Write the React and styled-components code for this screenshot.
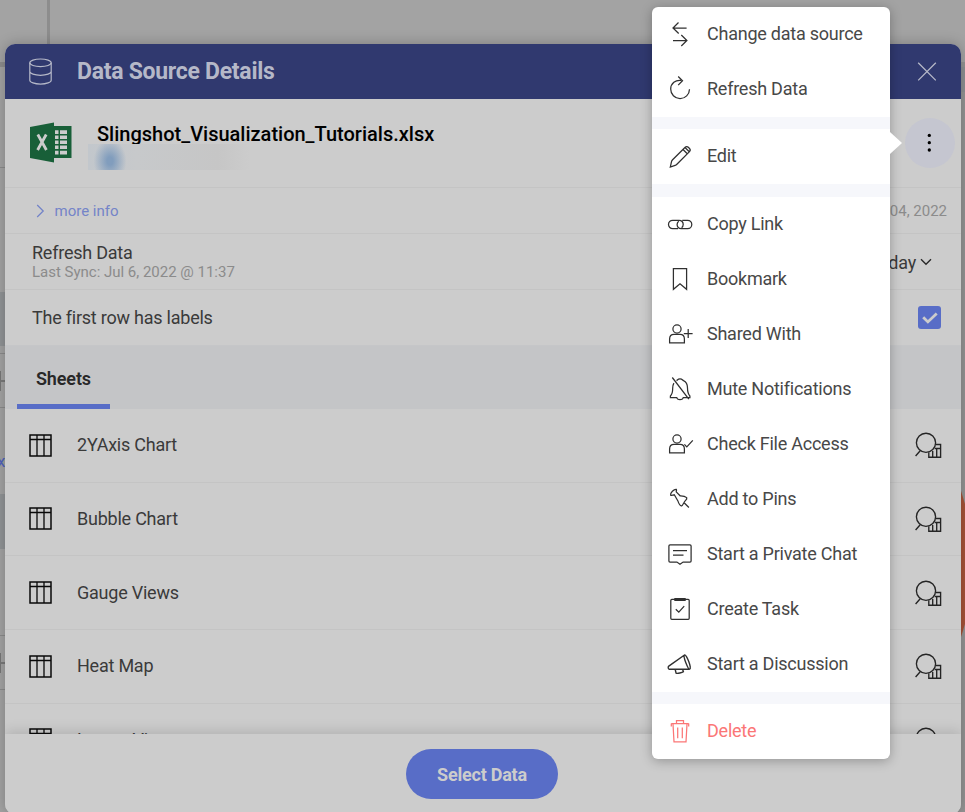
import React from "react";
import styled, { createGlobalStyle, css } from "styled-components";

const GlobalStyle = createGlobalStyle`
  *, *::before, *::after { box-sizing: border-box; }
  html, body { margin: 0; height: 100%; overflow: hidden; }
  body { background: #a3a3a3; font-family: Roboto, "Open Sans", sans-serif; color: #343434; }
  svg { display: block; flex: none; }
`;

const Screen = styled.div`
  position: relative;
  height: 812px;
  overflow: hidden;
  display: flex;
  flex-direction: column;
`;

/* ---------- page behind the dialog ---------- */
const TopBand = styled.div`
  height: 62px;
  flex: none;
  display: flex;
`;
const TopLeft = styled.div`
  width: 50px;
  border-right: 3px solid #8d8d8d;
`;
const Below = styled.div`
  flex: 1;
  display: flex;
  justify-content: space-between;
`;
const LeftStrip = styled.div`
  width: 50px;
  border-top: 5px solid #8d8d8d;
`;
const Block = styled.div`
  height: ${(p) => p.$h}px;
  background: ${(p) => p.$bg || "transparent"};
  ${(p) => p.$line && css`border-bottom: 1px solid #8b8b8b;`}
`;
const ColumnBar = styled(Block)`
  display: flex;
  align-items: center;
  &::before { content: ""; width: 1px; height: 20px; background: #777; }
  &::after { content: ""; width: 8px; height: 2px; background: #7a7a7a; }
`;
const FormulaMark = styled(Block)`
  color: #4f62bd;
  font-size: 17px;
  line-height: 20px;
  text-indent: -3px;
`;
const RightStrip = styled.div`
  width: 110px;
  padding-top: 5px;
  background: #949494;
`;
const Disc = styled.div`
  width: 458px;
  height: 458px;
  margin-left: -340px;
  border-radius: 50%;
  background: #a65338;
`;

/* ---------- dialog ---------- */
const Dialog = styled.section`
  position: absolute;
  left: 5px;
  top: 44px;
  width: 956px;
  height: 770px;
  border-radius: 10px;
  overflow: hidden;
  background: #ccc;
  box-shadow: 0 0 14px rgba(0, 0, 0, 0.24);
  display: flex;
  flex-direction: column;
`;
const Header = styled.header`
  flex: none;
  height: 55px;
  background: #30396f;
  color: #b5b8c8;
  display: flex;
  align-items: center;
  padding: 0 24px 0 22px;
  h1 { flex: 1; margin: 0 0 0 23px; font-size: 23px; line-height: 28px; font-weight: 700; letter-spacing: -0.28px; }
`;
const FileRow = styled.div`
  flex: none;
  height: 89px;
  border-bottom: 1px solid #c4c4c4;
  display: flex;
  align-items: center;
  padding: 0 6.5px 0 24px;
`;
const FileText = styled.div`
  flex: 1;
  margin-left: 15px;
  height: 50px;
  padding-top: 2px;
`;
const FileName = styled.div`
  height: 24px;
  overflow: hidden;
  padding-left: 9px;
  color: #000;
  font-size: 20px;
  line-height: 28px;
  font-weight: 500;
`;
const Owner = styled.div`
  width: 162px;
  height: 26px;
  background:
    radial-gradient(ellipse 20px 27px at 22px 17px, #819dbd 15%, rgba(129, 157, 189, 0) 82%),
    linear-gradient(90deg, #c2c7cc, #c7c9cb 30%, #c6c6c6 80%, #ccc);
`;
const MoreButton = styled.button`
  width: 50px;
  height: 50px;
  border: 0;
  padding: 0 1px 1px 0;
  border-radius: 50%;
  background: #c5c6d0;
  display: grid;
  place-items: center;
`;
const InfoRow = styled.div`
  flex: none;
  height: ${(p) => p.$h}px;
  border-bottom: 1px solid ${(p) => (p.$last ? "#c5c6c8" : "#c4c4c4")};
  display: flex;
  align-items: center;
  justify-content: space-between;
  padding: 0 ${(p) => p.$right || 14}px 0 27px;
  font-size: 18px;
`;
const MoreInfo = styled.a`
  display: flex;
  align-items: center;
  gap: 9.5px;
  padding-left: 4px;
  font-size: 15px;
  color: #7484c8;
`;
const Muted = styled.div`
  font-size: 15px;
  line-height: 17px;
  letter-spacing: -0.01px;
  color: #8b8b8b;
`;
const FileDate = styled(Muted)`
  padding-top: 2px;
`;
const Label = styled.div`
  font-size: 18px;
  line-height: 21px;
  letter-spacing: -0.23px;
  color: #3a3a3a;
`;
const SyncText = styled.div`
  margin-top: -1px;
  ${Label} { margin-bottom: 1px; }
`;
const Frequency = styled(Label)`
  display: flex;
  align-items: center;
  gap: 4px;
  padding-top: 1px;
`;
const Checkbox = styled.span`
  width: 23px;
  height: 23px;
  border-radius: 3px;
  background: #586dc7;
  display: grid;
  place-items: center;
`;
const Tabs = styled.nav`
  flex: none;
  height: 63px;
  padding-left: 12px;
  background: #c4c5c7;
  display: flex;
`;
const Tab = styled.div`
  width: 93px;
  border-bottom: 5px solid #586dc7;
  padding: 6px 0 0 0;
  display: grid;
  place-items: center;
  font-size: 18px;
  font-weight: 600;
  letter-spacing: -0.12px;
  color: #282828;
`;
const SheetList = styled.div`
  flex: none;
  height: 325px;
  overflow: hidden;
`;
const SheetRow = styled.div`
  height: 73.65px;
  border-bottom: 1px solid #c4c4c4;
  padding: 0 19px 0 24px;
  display: flex;
  align-items: center;
  ${Label} { flex: 1; margin: -1.2px 0 0 25px; }
`;
const Footer = styled.footer`
  flex: 1;
  position: relative;
  background: #ccc;
  box-shadow: 0 -3px 12px rgba(0, 0, 0, 0.13);
  display: flex;
  justify-content: center;
  align-items: flex-start;
  padding: 15px 2px 0 0;
`;
const PrimaryButton = styled.button`
  width: 152px;
  height: 50px;
  border: 0;
  border-radius: 25px;
  background: #586dc7;
  color: #ccc;
  font: 700 18px/51px Roboto, sans-serif;
  letter-spacing: -0.23px;
  padding: 0;
`;

/* ---------- menu ---------- */
const Menu = styled.div`
  position: absolute;
  left: 652px;
  top: 7px;
  width: 238px;
  border-radius: 6px;
  background: #fff;
  box-shadow: 0 2px 12px rgba(0, 0, 0, 0.28);
  &::after {
    content: "";
    position: absolute;
    left: 237.5px;
    top: 125px;
    border: 11px solid transparent;
    border-left: 12px solid #fff;
    border-right: 0;
  }
`;
const MenuItem = styled.div`
  height: 55px;
  padding: 0 0 1px 14px;
  display: flex;
  align-items: center;
  gap: 13px;
  font-size: 18px;
  letter-spacing: -0.24px;
  line-height: 22px;
  white-space: nowrap;
  color: ${(p) => (p.$danger ? "#fb7676" : "#484848")};
  svg { color: ${(p) => (p.$danger ? "#fb7676" : "#303030")}; }
`;
const Divider = styled.div`
  height: ${(p) => p.$h}px;
  background: #f6f7fb;
`;

const Stroke = ({ size = 28, w = 1.25, children, ...rest }) => (
  <svg width={size} height={size} viewBox={`0 0 ${size} ${size}`} fill="none" stroke="currentColor" strokeWidth={w} {...rest}>
    {children}
  </svg>
);

const person = (
  <>
    <circle cx="11" cy="9" r="4.1" />
    <path d="M3.6 22.9v-4c0-3 2-4.5 4.4-4.5h6c2.5 0 4.4 1.5 4.4 4.5v4z" />
  </>
);
const icons = {
  change: <path d="M20.6 8H7m5.5-5.5L7 8l5.7 5.5M7 20.5h13.7M15.3 15l5.6 5.5-5.6 5.5" />,
  refresh: <path d="M15.2 5.4c-5.6-.8-10.5 3-10.5 8.7a9.4 9.4 0 0 0 18.8.2M12.2 1.5l4.3 4.2-4.3 4.4" />,
  edit: <path d="M4.3 25.1l1.2-5.5c.2-.8.5-1.3 1.1-1.9L19.2 5.2c1-1 2.2-.8 3.1.1l1.2 1.2c.9.9 1 2 0 3.1L10.9 22.2c-.6.6-1 .9-1.8 1.2zM17 7.5l4.3 4.3M19 5.5l4.3 4.3" />,
  link: <path d="M12 18.7H6.7a4.2 4.2 0 0 1 0-8.4h6.5a4 4 0 0 1 4 4.2c0 1.3-.6 2.4-1.6 3.2M16.3 10.3h5.300a4.200 4.200 0 0 1 0 8.400h-6.500a4 4 0 0 1-4-4.200c0-1.300.6-2.400 1.600-3.200" />,
  bookmark: <path d="M7.4 3.6h13.2v20.7L14 18.8l-6.6 5.5z" />,
  shared: <>{person}<path d="M17.8 13.5h8.8M22.2 9.1v8.8" /></>,
  mute: <path d="M10.5 5.6c1-.4 1.2-1.7 3.5-1.7s2.5 1.3 3.5 1.7c3.2 1.3 4 4.2 4 7.5 0 4.5.8 6.3 2.4 7.9v1.5h-6.6c-.5 2.7-6.1 2.7-6.6 0H4.4V21c1.8-1.5 2.3-3.3 2.3-7.9 0-2 .4-3.6 1.2-5M6.3 2.5l16.5 21.7" />,
  access: <>{person}<path d="M18.4 14.3l2.4 2.6 6-6.6" /></>,
  pin: <path d="M4.6 10.1c-.4-2.4 3.3-6 5.7-5.7.5.9.1 1.7-.1 2.5l3.9 3.9c2.9-.1 5.2.5 6.6 1.8.6 1.6-.6 2.2-1.8 3.5-1.3 1.4-1.8 4.3-3.5 4.9-2-.5-2.8-2.9-3.5-5.1L8.3 9.8c-1.3.4-2.5.9-3.7.3zM17.6 17.2l5.3 5.3" />,
  chat: <path d="M4 4.8h20c.8 0 1.1.4 1.1 1.1v15c0 .8-.3 1.1-1.1 1.1h-6.9L14 24.2 10.9 22H4c-.8 0-1.1-.3-1.1-1.1v-15c0-.7.3-1.1 1.1-1.1zM7 10.5h14M7 15h10.5" />,
  task: <><path d="M5.8 4.4h16.4c.7 0 1 .3 1 1v17.9c0 .7-.3 1-1 1H5.8c-.7 0-1-.3-1-1V5.4c0-.7.3-1 1-1zM9.8 14.2l3 3 5.4-6" /><path d="M8.3 4.5h11.4" strokeWidth="3" /></>,
  discussion: <path d="M18.5 5L2.8 16.1c-1 .9-.7 3.1.4 3.1h20.4M18.5 5c1.8-1.1 7.8 13.4 5.1 14.2M18.5 5c-1.8 1.3 3.7 14.5 5.1 14.2M9.2 19.5l.9 3.7c1.4.5 6.1-.5 7.3-1.4l-.8-2.6" strokeWidth="1.4" />,
  trash: <path d="M5.3 6.7h17.4M5.3 6.5v2.9M22.7 6.5v2.9M10.5 6.5V3.6h7v2.9M7 7l1 17.8h12L21 7M11.7 10.5v10.8M16.3 10.5v10.8" />,
};

const menu = [
  ["change", "Change data source"],
  ["refresh", "Refresh Data"],
  12,
  ["edit", "Edit"],
  13,
  ["link", "Copy Link"],
  ["bookmark", "Bookmark"],
  ["shared", "Shared With"],
  ["mute", "Mute Notifications"],
  ["access", "Check File Access"],
  ["pin", "Add to Pins"],
  ["chat", "Start a Private Chat"],
  ["task", "Create Task"],
  ["discussion", "Start a Discussion"],
  12,
  ["trash", "Delete"],
];

const ExcelIcon = () => (
  <svg width="44" height="42" viewBox="0 0 44 42">
    <path d="M24 4h18.500v32H24z" fill="#185f38" />
    <path d="M26 8.2h3.500V12H26zM31 8.200h7V12h-7zM26 13.500h3.500v3.600H26zM31 13.500h7v3.600h-7zM26 18.500h3.500v3.600H26zM31 18.500h7v3.600h-7zM26 23.500h3.500v3.600H26zM31 23.500h7v3.600h-7zM26 28.700h3.500v3.800H26zM31 28.700h7v3.800h-7z" fill="#ccc" />
    <path d="M1 5L25 .5v40L1 36z" fill="#185f38" />
    <path d="M8.800 12.500l8.600 15.500M17.200 12.500L8.600 28" stroke="#ccc" strokeWidth="2.800" />
  </svg>
);

const GridIcon = () => (
  <svg width="23" height="23" viewBox="0 0 23 23" fill="none" stroke="#090909">
    <path d="M1 1h21v21H1z" strokeWidth="1.5" />
    <path d="M1 5.5h21M8 1v21M15 1v21" strokeWidth="1.3" />
  </svg>
);

const PreviewIcon = () => (
  <Stroke w={1.35} stroke="#242424">
    <circle cx="12" cy="11.8" r="9.6" />
    <path d="M6.2 19.8L1.6 25M21.8 13.5h4.8v12.7H14.8v-5M20.7 17.5h5.9M18.7 20v6.2M22.7 16.8v9.4" />
  </Stroke>
);

const sheets = ["2YAxis Chart", "Bubble Chart", "Gauge Views", "Heat Map", "Layers View"];

export default function App() {
  return (
    <Screen>
      <GlobalStyle />
      <TopBand><TopLeft /></TopBand>
      <Below>
        <LeftStrip>
          <Block $h={101} $line />
          <Block $h={124} />
          <Block $h={54} $bg="#919496" />
          <Block $h={8} $line />
          <ColumnBar $h={54} $line />
          <Block $h={43} />
          <FormulaMark $h={43}>x</FormulaMark>
          <Block $h={55} $bg="#919496" />
          <Block $h={87} $line />
          <ColumnBar $h={54} $line />
        </LeftStrip>
        <RightStrip>
          <Block $h={25} $bg="#8d9093" />
          <Block $h={243} />
          <Disc />
        </RightStrip>
      </Below>

      <Dialog>
        <Header>
          <svg width="27" height="28" viewBox="0 0 27 28" fill="none" stroke="#b5b8c8" strokeWidth="1.2">
            <ellipse cx="13.5" cy="4.8" rx="10.7" ry="3.8" />
            <path d="M2.8 4.8v17.4c0 2.1 4.8 3.9 10.7 3.9s10.7-1.8 10.7-3.9V4.8M2.8 13.5c0 2.1 4.8 3.8 10.7 3.8s10.7-1.7 10.7-3.8" />
          </svg>
          <h1>Data Source Details</h1>
          <svg width="20" height="20" viewBox="0 0 20 20" stroke="#b5b8c8" strokeWidth="1.3">
            <path d="M1.2 .8l17.600 17.600M18.800 .8L1.200 18.400" />
          </svg>
        </Header>
        <FileRow>
          <ExcelIcon />
          <FileText>
            <FileName>Slingshot_Visualization_Tutorials.xlsx</FileName>
            <Owner />
          </FileText>
          <MoreButton aria-label="More">
            <svg width="6" height="20" viewBox="0 0 6 20">
              <circle cx="3.3" cy="2.4" r="1.65" /><circle cx="3.3" cy="9.7" r="1.65" /><circle cx="3.3" cy="17" r="1.65" />
            </svg>
          </MoreButton>
        </FileRow>
        <InfoRow $h={46}>
          <MoreInfo>
            <svg width="9" height="14" viewBox="0 0 9 14" fill="none" stroke="#7484c8" strokeWidth="1.3"><path d="M1.2 1l6 6-6 6" /></svg>
            more info
          </MoreInfo>
          <FileDate>04, 2022</FileDate>
        </InfoRow>
        <InfoRow $h={56} $right={29}>
          <SyncText>
            <Label>Refresh Data</Label>
            <Muted>Last Sync: Jul 6, 2022 @ 11:37</Muted>
          </SyncText>
          <Frequency>
            day
            <svg width="12" height="8" viewBox="0 0 12 8" fill="none" stroke="#282828" strokeWidth="1.4"><path d="M1 1.2l5 5 5-5" /></svg>
          </Frequency>
        </InfoRow>
        <InfoRow $h={56} $right={20} $last>
          <Label>The first row has labels</Label>
          <Checkbox>
            <svg width="16" height="12" viewBox="0 0 16 12" fill="none" stroke="#ccc" strokeWidth="2.8"><path d="M1.2 5.2l4.7 4.7 8.8-8.3" /></svg>
          </Checkbox>
        </InfoRow>
        <Tabs><Tab>Sheets</Tab></Tabs>
        <SheetList>
          {sheets.map((name) => (
            <SheetRow key={name}>
              <GridIcon />
              <Label>{name}</Label>
              <PreviewIcon />
            </SheetRow>
          ))}
        </SheetList>
        <Footer><PrimaryButton>Select Data</PrimaryButton></Footer>
      </Dialog>

      <Menu>
        {menu.map((m, i) =>
          typeof m === "number" ? (
            <Divider key={i} $h={m} />
          ) : (
            <MenuItem key={m[1]} $danger={m[0] === "trash"}>
              <Stroke>{icons[m[0]]}</Stroke>
              {m[1]}
            </MenuItem>
          )
        )}
      </Menu>
    </Screen>
  );
}
